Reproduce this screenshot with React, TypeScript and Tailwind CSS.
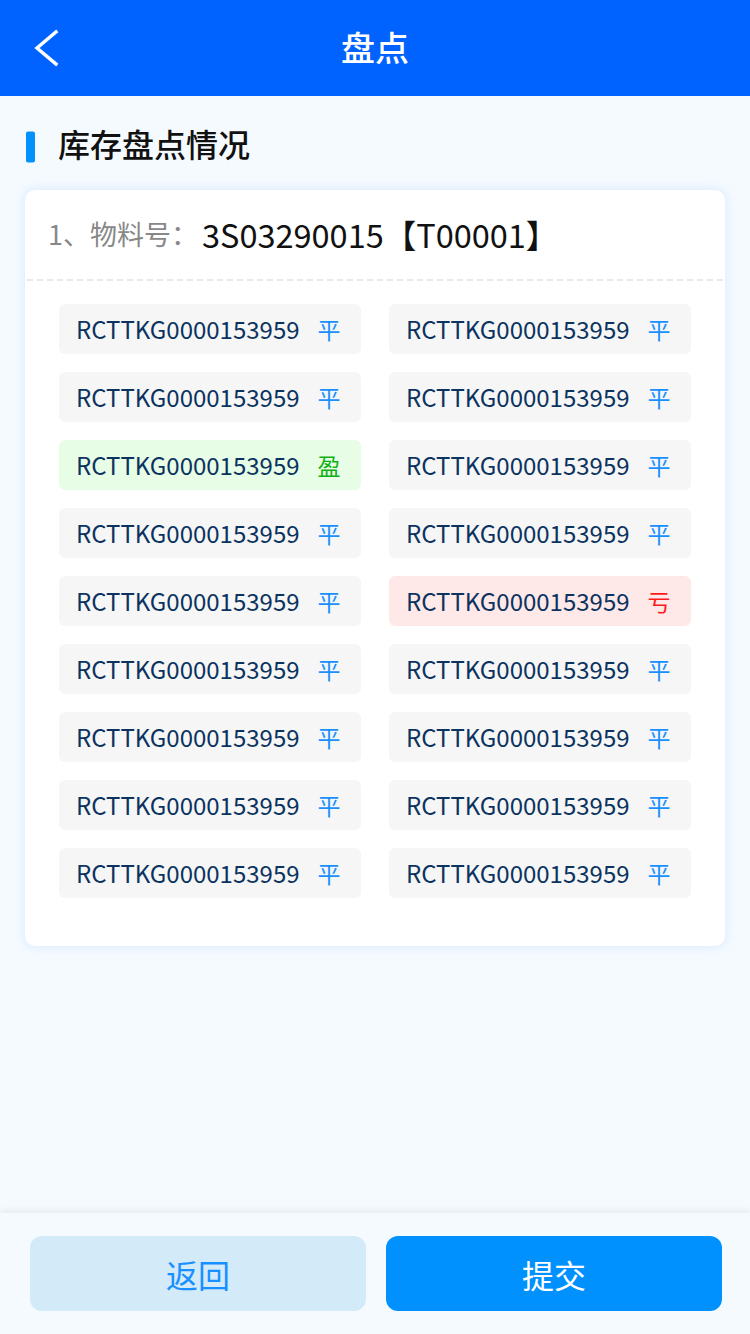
import React from "react";

type Item = { code: string; status: "平" | "盈" | "亏" };

const items: Item[] = Array.from({ length: 18 }, (_, i) => ({
  code: "RCTTKG0000153959",
  status: i === 4 ? "盈" : i === 9 ? "亏" : "平",
}));

function Tag({ item }: { item: Item }) {
  const box =
    item.status === "盈"
      ? "bg-[#e8fde6]"
      : item.status === "亏"
      ? "bg-[#ffe8e8]"
      : "bg-[#f6f6f6]";
  const tag =
    item.status === "盈"
      ? "text-[#10b014]"
      : item.status === "亏"
      ? "text-[#ff1a1a]"
      : "text-[#1890ff]";
  return (
    <div className={`flex h-[50px] items-center rounded-[6px] pl-[17px] ${box}`}>
      <span className="text-[24px] leading-none text-[#0b3360]">{item.code}</span>
      <span className={`ml-[18px] text-[23px] leading-none ${tag}`}>{item.status}</span>
    </div>
  );
}

export default function App() {
  return (
    <div
      className="flex min-h-[1334px] w-[750px] flex-col bg-[#f5faff]"
      style={{ fontFamily: '"Noto Sans CJK SC", "Noto Sans", sans-serif' }}
    >
      <header className="relative flex h-[96px] items-center justify-center bg-[#0062ff]">
        <svg
          className="absolute left-[30px] top-[27px]"
          width="32"
          height="42"
          viewBox="0 0 32 42"
          fill="none"
        >
          <path d="M26 5 L7 21 L26 37" stroke="white" strokeWidth="3.4" strokeLinecap="square" />
        </svg>
        <h1 className="mb-[2px] text-[34px] font-medium leading-none text-white">盘点</h1>
      </header>

      <main className="flex-1 px-[25px]">
        <div className="mt-[31px] flex h-[32px] items-center">
          <div className="ml-[1px] h-[31px] w-[9px] translate-y-[3.5px] rounded-[2px] bg-[#0091ff]" />
          <h2 className="ml-[23px] text-[32px] font-medium leading-none text-[#111]">库存盘点情况</h2>
        </div>

        <section className="mt-[31px] rounded-[10px] bg-white pb-[48px] shadow-[0_0_12px_rgba(150,200,250,0.35)]">
          <div className="flex h-[89px] items-center px-[23px] pb-[1px]">
            <span className="text-[27px] text-[#888]">1、物料号：</span>
            <span className="ml-[4px] text-[32.5px] text-[#111]">3S03290015【T00001】</span>
          </div>
          <div className="mx-[2px] border-t-2 border-dashed border-[#e8e8e8]" />
          <div className="mt-[23px] grid grid-cols-2 gap-x-[28px] gap-y-[18px] px-[34px]">
            {items.map((it, i) => (
              <Tag key={i} item={it} />
            ))}
          </div>
        </section>
      </main>

      <footer className="flex h-[121px] gap-[20px] bg-[#f5faff] pl-[30px] pr-[28px] pt-[23px] shadow-[0_-3px_6px_rgba(0,0,0,0.06)]">
        <button className="h-[75px] flex-1 rounded-[12px] bg-[#d3eaf8] text-[32px] text-[#1890ff]">返回</button>
        <button className="h-[75px] flex-1 rounded-[12px] bg-[#0091ff] text-[32px] text-white">提交</button>
      </footer>
    </div>
  );
}
